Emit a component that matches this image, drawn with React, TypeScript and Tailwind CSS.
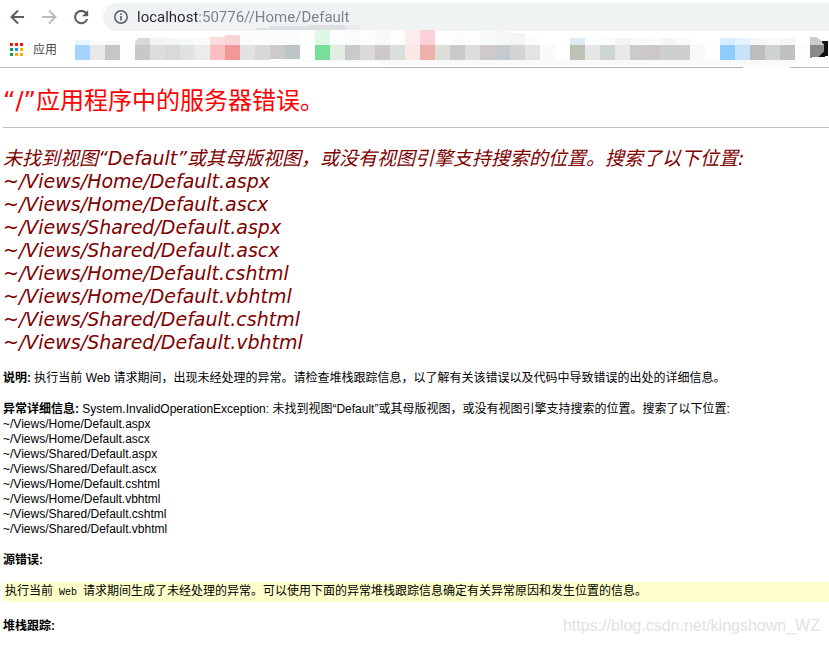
import { useState } from 'react';

const locations = [
    '~/Views/Home/Default.aspx',
    '~/Views/Home/Default.ascx',
    '~/Views/Shared/Default.aspx',
    '~/Views/Shared/Default.ascx',
    '~/Views/Home/Default.cshtml',
    '~/Views/Home/Default.vbhtml',
    '~/Views/Shared/Default.cshtml',
    '~/Views/Shared/Default.vbhtml',
];

const message = '未找到视图“Default”或其母版视图，或没有视图引擎支持搜索的位置。搜索了以下位置:';

// one colour per 15px block, first block starts at x = 75
const blocks = [
    '#a5d3ff', '#e9e7e7', '#c6c6c6', '#fcfdff', '#c8c8c8', '#dddddd', '#d8d9db', '#dfe3e4',
    '#ececea', '#f8bfc0', '#f29898', '#e2e2e3', '#d8d8d8', '#cdcaca', '#bec5c8', '#ffffff',
    '#77df98', '#e2ece3', '#c9c9c9', '#dadadd', '#cdc9ca', '#d8dfdd', '#fce7e7', '#eeb0a9',
    '#dddddb', '#c9cacc', '#dcdcdf', '#cdcac9', '#c4cacd', '#d3d5d4', '#e2e4e3', '#fafafa',
    '#ffffff', '#bcc3b6', '#e7e7e7', '#ced5d5', '#e7e8e7', '#cdcacc', '#ccc8ca', '#cdd0d1',
    '#cfcfd1', '#f8f8f8', '#ffffff', '#8fcdff', '#c8e2f9', '#bdbdbf', '#ced2d3', '#c2c1c2',
    '#fbfdff',
];

// paler blocks above the main row: [x, top, colour]
const paleBlocks: [number, number, string][] = [
    [75, 40, '#e8f4ff'], [90, 41, '#fafafa'], [105, 41, '#f8f8f8'], [120, 41, '#fdfdff'],
    [135, 38, '#d8d8d8'], [150, 37, '#f4f4f4'], [165, 38, '#f6f6f6'], [180, 38, '#f8fafa'],
    [195, 38, '#fafafa'], [210, 37, '#fadcde'], [225, 35, '#f8d4d6'], [240, 32, '#fbfbfb'],
    [255, 30, '#fcfcfc'], [270, 30, '#fcfcfc'], [285, 30, '#fbfcfc'], [300, 30, '#fefefe'],
    [315, 30, '#def7e6'], [330, 30, '#fcfefc'], [345, 30, '#fafcfb'], [360, 30, '#fcfefd'],
    [375, 30, '#f8f9f9'], [390, 30, '#fbfefd'], [405, 30, '#ffecef'], [420, 30, '#fcd0d8'],
    [435, 31, '#fcfdfc'], [450, 31, '#fcfcfc'], [465, 31, '#fcfdfd'], [480, 31, '#f9fbfa'],
    [495, 31, '#f6f7f7'], [510, 33, '#f3f4f5'], [525, 37, '#fbfcfc'], [570, 38, '#dcebf4'],
    [585, 38, '#fcfdfd'], [600, 38, '#f9fcfb'], [615, 38, '#f4f4f4'], [630, 38, '#f8faf9'],
    [645, 38, '#fbfbfb'], [660, 38, '#f4f5f5'], [675, 38, '#f9fafa'], [720, 38, '#d8edff'],
    [735, 38, '#e6f3ff'], [750, 38, '#f6f6f6'], [765, 38, '#f8fafa'], [780, 38, '#f6f6f6'],
];

const Bookmarks = () => (
    <svg
        className="absolute -bottom-px left-0 pointer-events-none"
        width="829"
        height="43"
        viewBox="0 25 829 43"
        shapeRendering="crispEdges"
        aria-hidden="true"
    >
        <path d="M256 30v-2h14v-2h40v-1h50v5z" fill="#dde0e2" />
        <path d="M345 25h15v5h-15z" fill="#e9ecee" />
        <path d="M300 60h497l-3 5H388v-1h-8v-2H306v-1h-6z" fill="#f9f9f9" />
        <path d="M743 65h47v3h-47z" fill="#fbfbfb" />
        {paleBlocks.map(([x, top, fill]) => (
            <rect key={x} x={x} y={top} width="15" height={45 - top} fill={fill} />
        ))}
        {blocks.map((fill, i) => (
            <rect key={i} x={75 + i * 15} y="45" width="15" height={i > 12 && i < 15 ? 14 : 15} fill={fill} />
        ))}
        <path d="M135 37h5l-5 4z" fill="#fff" />
        <path d="M820 41h8v15h-3v1h-9v-3h4z" fill="#111" />
        <path d="M810 37h6l5 3 3 5h-14z" fill="#ccc" />
        <path d="M810 45h14v6l-2 3-4 3h-6v1h-2z" fill="#888" />
    </svg>
);

const AppsIcon = () => {
    const colors = ['#f21b0c', '#f21b0c', '#f21b0c', '#0f9d58', '#1a8cff', '#ffab00', '#0f9d58', '#ffab00', '#ffab00'];
    return (
        <svg width="13" height="13" viewBox="0 0 13 13" aria-hidden="true" shapeRendering="crispEdges">
            {colors.map((c, i) => (
                <rect key={i} x={(i % 3) * 5} y={Math.floor(i / 3) * 5} width="3" height="3" fill={c} />
            ))}
        </svg>
    );
};

function Toolbar() {
    const [url, setUrl] = useState('localhost:50776//Home/Default');

    return (
        <header className="relative h-[68px] border-b border-[#b4b6b8] bg-white">
            <div className="flex items-center pt-[3px]">
                <nav className="flex w-[103px] shrink-0 items-center gap-4 pl-[9px] text-[#5a5e63]">
                    <button aria-label="后退" className="h-4 w-4">
                        <svg width="16" height="16" viewBox="0 0 16 16" fill="none" stroke="currentColor" strokeWidth="2">
                            <path d="M15 8H3M9 1.5 2.5 8 9 14.5" />
                        </svg>
                    </button>
                    <button aria-label="前进" className="h-4 w-4 text-[#babcbe]">
                        <svg width="16" height="16" viewBox="0 0 16 16" fill="none" stroke="currentColor" strokeWidth="2">
                            <path d="M1 8h13M8 1.5 14.5 8 8 14.5" />
                        </svg>
                    </button>
                    <button aria-label="重新加载" className="h-4 w-4">
                        <svg width="16" height="16" viewBox="0 0 16 16">
                            <path d="M13.2 4.2A6.2 6.2 0 1 0 14.2 10" fill="none" stroke="currentColor" strokeWidth="2.1" />
                            <path d="M15.2 1v6.2H9z" fill="currentColor" />
                        </svg>
                    </button>
                </nav>
                <div className="flex h-7 flex-1 items-center gap-2 rounded-l-full bg-[#eff3f4] pl-[10px]">
                    <svg width="16" height="16" viewBox="0 0 16 16" fill="none" stroke="#5a5e63" aria-hidden="true">
                        <circle cx="8" cy="8" r="6.2" strokeWidth="1.5" />
                        <path d="M8 7v4.5M8 4.3v1.6" strokeWidth="1.6" />
                    </svg>
                    {/* host part is darker than the rest of the url */}
                    <input
                        type="text"
                        aria-label="地址"
                        value={url}
                        onChange={(e) => setUrl(e.target.value)}
                        className="h-7 min-w-0 flex-1 bg-[linear-gradient(90deg,#26282b_60px,#7b8085_60px)] bg-clip-text font-['Roboto',sans-serif] text-[15px] text-transparent caret-black outline-none"
                    />
                </div>
            </div>
            <div className="flex h-9 items-center pl-[10px]">
                <button className="flex items-center gap-[10px] font-['Noto_Sans_CJK_SC',sans-serif] text-xs text-[#44474b]">
                    <AppsIcon />
                    应用
                </button>
            </div>
            <Bookmarks />
        </header>
    );
}

export default function App() {
    return (
        <div className="min-h-screen bg-white font-['Liberation_Sans','Noto_Sans_CJK_SC',sans-serif] text-xs leading-[15px] text-black">
            <Toolbar />
            <main className="pl-[3px]">
                <h1 className="pt-[17px] font-['DejaVu_Sans','Noto_Sans_CJK_SC',sans-serif] text-2xl leading-8 text-[#ff0000]">
                    “/”应用程序中的服务器错误。
                </h1>
                <hr className="mt-[10px] border-[#c0c0c0]" />
                <h2 className="mt-[19px] whitespace-nowrap font-['DejaVu_Sans','Noto_Sans_CJK_SC',sans-serif] text-[19px] leading-[23px] text-[#800000] italic">
                    {message}
                    {locations.map((path) => (
                        <span key={path} className="block">{path}</span>
                    ))}
                </h2>
                <p className="mt-[17px]">
                    <b>说明:</b> 执行当前 Web 请求期间，出现未经处理的异常。请检查堆栈跟踪信息，以了解有关该错误以及代码中导致错误的出处的详细信息。
                </p>
                <p className="mt-4">
                    <b>异常详细信息:</b> System.InvalidOperationException: {message}
                    {locations.map((path) => (
                        <span key={path} className="block">{path}</span>
                    ))}
                </p>
                <h3 className="mt-4 font-bold">源错误:</h3>
                <pre className="mt-[14px] bg-[#ffffcc] pt-px pl-[2px] font-['Liberation_Mono','Noto_Sans_CJK_SC',monospace] leading-[19px]">
                    执行当前<span className="text-[10px]"> Web </span>请求期间生成了未经处理的异常。可以使用下面的异常堆栈跟踪信息确定有关异常原因和发生位置的信息。
                </pre>
                <div className="mt-[14px] flex items-center justify-between pr-[9px]">
                    <h3 className="font-bold">堆栈跟踪:</h3>
                    <span className="text-base leading-5 text-[#e2e2e2]">https://blog.csdn.net/kingshown_WZ</span>
                </div>
            </main>
        </div>
    );
}
